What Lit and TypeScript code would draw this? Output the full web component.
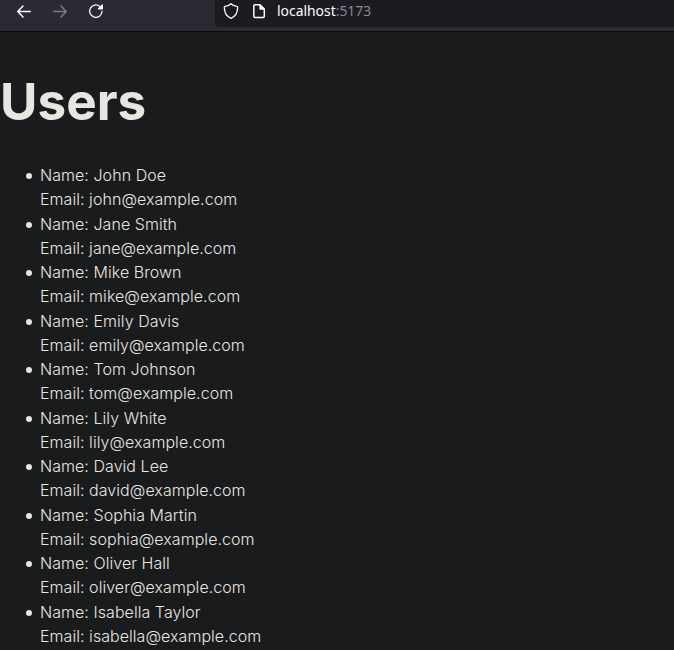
import { LitElement, html, css } from "lit";
import { customElement } from "lit/decorators.js";

interface User {
  name: string;
  email: string;
}

const USERS: User[] = [
  { name: "John Doe", email: "john@example.com" },
  { name: "Jane Smith", email: "jane@example.com" },
  { name: "Mike Brown", email: "mike@example.com" },
  { name: "Emily Davis", email: "emily@example.com" },
  { name: "Tom Johnson", email: "tom@example.com" },
  { name: "Lily White", email: "lily@example.com" },
  { name: "David Lee", email: "david@example.com" },
  { name: "Sophia Martin", email: "sophia@example.com" },
  { name: "Oliver Hall", email: "oliver@example.com" },
  { name: "Isabella Taylor", email: "isabella@example.com" },
];

@customElement("browser-toolbar")
class BrowserToolbar extends LitElement {
  static styles = css`
    :host {
      display: flex;
      box-sizing: border-box;
      height: 32px;
      background: #2b2a33;
      border-bottom: 1px solid #0c0c0d;
      color: #fbfbfe;
      font: 13.9px/22px "Noto Sans", sans-serif;
    }
    .nav {
      display: flex;
      gap: 20px;
      width: 199px;
      padding: 3px 0 0 16px;
    }
    svg {
      display: block;
      flex: none;
      width: 16px;
      height: 16px;
      fill: none;
      stroke: currentColor;
      stroke-width: 1.5;
      stroke-linecap: round;
      stroke-linejoin: round;
    }
    .thin {
      stroke-width: 1.3;
    }
    .solid {
      fill: currentColor;
      stroke: none;
    }
    .disabled {
      color: #7c7b82;
    }
    .address {
      display: flex;
      flex: 1;
      gap: 12px;
      height: 27px;
      box-sizing: border-box;
      padding: 3px 0 0 8px;
      border-radius: 0 0 0 4px;
      background: #1c1b22;
    }
    .url {
      margin: -3px 0 0 -2px;
    }
    .port {
      color: #88878d;
    }
  `;

  render() {
    return html`
      <div class="nav">
        <svg viewBox="0 0 16 16"><path d="M14.3 8.500H1.800M7 3 1.700 8.500 7 14" /></svg>
        <svg class="disabled" viewBox="0 0 16 16"><path d="M1.700 8.500H14.200M9 3l5.300 5.500L9 14" /></svg>
        <svg viewBox="0 0 16 16">
          <path class="thin" d="M14 8.500A6.200 6.200 0 1 1 11.800 3.400" />
          <path class="solid" d="M14.200 1.300a.6.6 0 0 1 .8.500V6a.5.500 0 0 1-.5.500h-4.200a.6.600 0 0 1-.4-1Z" />
        </svg>
      </div>
      <div class="address">
        <svg class="thin" viewBox="0 0 16 16"><path d="M8 .7C9.500 2.200 11.500 3.200 14.600 3.700c.3 5.200-2 9.600-6.600 11.600C3.400 13.300 1.100 8.900 1.400 3.700 4.500 3.200 6.500 2.200 8 .7Z" /></svg>
        <svg viewBox="0 0 16 16">
          <path d="M4 1.700h5L13.300 6v7.300a1.200 1.200 0 0 1-1.200 1.200H4a1.200 1.200 0 0 1-1.200-1.200V2.900A1.200 1.200 0 0 1 4 1.700Z" />
          <path class="solid" d="M8.300 1.500h1L13.500 5.700v1H9.300a1 1 0 0 1-1-1Z" />
        </svg>
        <span class="url">localhost<span class="port">:5173</span></span>
      </div>
    `;
  }
}

@customElement("app-root")
class AppRoot extends LitElement {
  static styles = css`
    :host {
      display: block;
      height: 650px;
      overflow: hidden;
      background: #1a1b1c;
      color: #e8e6e1;
      font: 300 16px/24.25px Inter, sans-serif;
    }
    h1 {
      margin: 41px 0 0;
      font-size: 51.2px;
      line-height: 56px;
      font-weight: 700;
    }
    ul {
      margin: 34.1px 0 0;
      padding: 0;
      list-style: none;
      letter-spacing: 0.05px;
    }
    li {
      display: grid;
      grid-template-columns: 26px 14px auto;
    }
    li::before {
      content: "";
      grid-column: 2;
      width: 6px;
      height: 6px;
      margin-top: 10px;
      border-radius: 50%;
      background: currentColor;
    }
  `;

  render() {
    return html`
      <browser-toolbar></browser-toolbar>
      <h1>Users</h1>
      <ul>
        ${USERS.map(
          (user) => html`<li><div>Name: ${user.name}<br />Email: ${user.email}</div></li>`
        )}
      </ul>
    `;
  }
}
